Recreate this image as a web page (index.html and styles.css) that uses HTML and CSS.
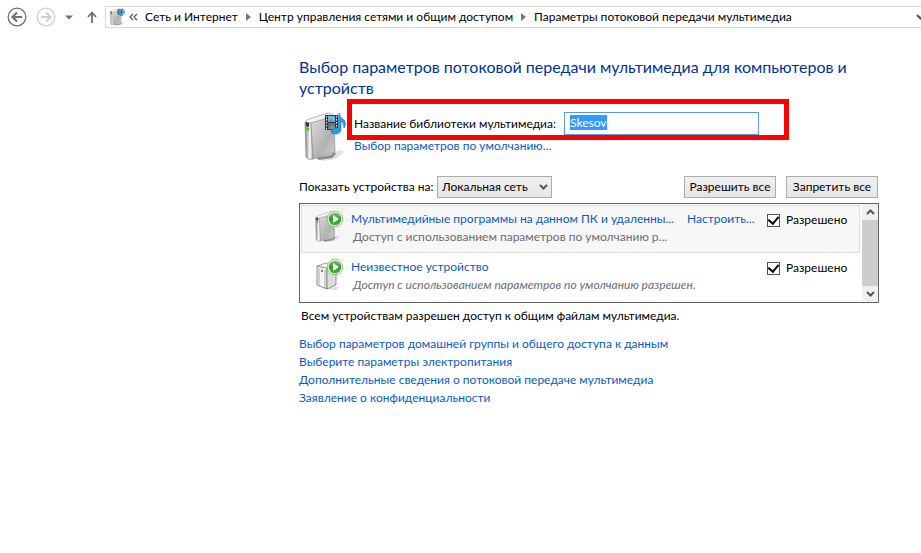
FILE: index.html
```html
<!DOCTYPE html>
<html lang="ru">
<head>
  <meta charset="UTF-8" />
  <meta name="viewport" content="width=device-width, initial-scale=1.0" />
  <title>Параметры потоковой передачи мультимедиа</title>
  <link rel="stylesheet" href="styles.css">
</head>
<body>

  <!-- Shared drawings -->
  <svg class="defs" width="0" height="0" aria-hidden="true">
    <defs>
      <linearGradient id="metal" x1="0" y1="0" x2="1" y2="1">
        <stop offset="0" stop-color="#dedede" />
        <stop offset="0.6" stop-color="#b2b2b2" />
        <stop offset="1" stop-color="#cfcfcf" />
      </linearGradient>
      <linearGradient id="side" x1="0" y1="0" x2="1" y2="0">
        <stop offset="0" stop-color="#7d7d7d" />
        <stop offset="0.6" stop-color="#fafafa" />
        <stop offset="1" stop-color="#b4b4b4" />
      </linearGradient>
      <linearGradient id="green" x1="0" y1="0" x2="0" y2="1">
        <stop offset="0" stop-color="#7cc666" />
        <stop offset="0.5" stop-color="#2f9d22" />
        <stop offset="1" stop-color="#3fb52c" />
      </linearGradient>
      <symbol id="drive" viewBox="0 0 44 50">
        <path d="M12 45 L38 38 L40 40 L32 47 L20 49Z" fill="#e2e2e2" />
        <path d="M12 46 L27 43 L30 40 L32 42 L28 46 L15 48Z" fill="#8c8c8c" />
        <path d="M1 10 L7 11 L9 47 Q5 49 2 45Z" fill="url(#side)" stroke="#888" stroke-width="0.7" />
        <path d="M7 11 L30 4 L31 40 L9 47Z" fill="url(#metal)" stroke="#8d8d8d" stroke-width="0.7" />
        <path d="M1 10 Q2 8 5 7 L24 1 Q29 1 30 4 L7 11Z" fill="#f4f4f4" stroke="#999" stroke-width="0.7" />
        <path d="M2 10 L5 11 L5 15 L2 14Z" fill="#333" />
        <path d="M2 15 L5 16 L5 19 L2 18Z" fill="#5fc01d" />
      </symbol>
      <symbol id="media" viewBox="0 0 44 50">
        <use href="#drive" width="44" height="50" />
        <path d="M21 3 h13 v15 h-13z" fill="#303b47" />
        <path d="M24 4 h7 v6 h-7z" fill="#66b8e8" />
        <path d="M24 11 h7 v6 h-7z" fill="#397fb2" />
        <path d="M24 10 l3 -3 l4 3z M24 17 l4 -4 l3 2 v2z" fill="#d57b40" />
        <path d="M22.500 4 v14 M32.500 4 v14" stroke="#e8edf2" stroke-width="1" stroke-dasharray="1.500 1.500" />
        <path d="M35 1 Q36 6 40 8 Q43 12 40 16 Q40 11 37 9 V17 Q37 22 31 22 Q27 22 27 19 Q28 15 34 16Z" fill="#2b9de6" stroke="#1671b8" stroke-width="0.6" />
      </symbol>
      <symbol id="play" viewBox="0 0 18 18">
        <circle cx="9" cy="9" r="7.800" fill="#f4f8f3" stroke="#8fa18c" stroke-width="0.8" />
        <circle cx="9" cy="9" r="6.300" fill="url(#green)" />
        <path d="M7 5 L13 9 L7 13Z" fill="#fff" />
      </symbol>
      <symbol id="crumb" viewBox="0 0 5 8">
        <path d="M0 0 L5 4 L0 8Z" fill="#777" />
      </symbol>
      <symbol id="chevron" viewBox="0 0 9 6">
        <path d="M1 1 L4.500 4.500 L8 1" fill="none" stroke="#555" stroke-width="2" />
      </symbol>
    </defs>
  </svg>

  <nav class="toolbar">
    <button class="nav-btn" aria-label="Назад">
      <svg width="20" height="20" viewBox="0 0 20 20" fill="none" stroke="#707070">
        <circle cx="10" cy="10" r="8.800" stroke-width="1.300" />
        <path d="M15 10 H6 M10 5.500 L5.500 10 L10 14.500" stroke-width="2.200" />
      </svg>
    </button>
    <button class="nav-btn" aria-label="Вперед">
      <svg width="20" height="20" viewBox="0 0 20 20" fill="none" stroke="#cfcfcf">
        <circle cx="10" cy="10" r="8.800" stroke-width="1.300" />
        <path d="M5 10 H14 M10 5.500 L14.500 10 L10 14.500" stroke-width="2" />
      </svg>
    </button>
    <button class="nav-btn" aria-label="Журнал">
      <svg width="8" height="5" viewBox="0 0 8 5"><path d="M0 0.500 H8 L4 4.500Z" fill="#707070" /></svg>
    </button>
    <button class="nav-btn nav-up" aria-label="Вверх">
      <svg width="10" height="12" viewBox="0 0 10 12" fill="none" stroke="#707070" stroke-width="1.800">
        <path d="M5 12 V2 M1 6 L5 1.500 L9 6" />
      </svg>
    </button>
    <div class="address">
      <svg class="address-icon" width="16" height="18"><use href="#media" /></svg>
      <svg class="address-back" width="9" height="8" viewBox="0 0 9 8" fill="none" stroke="#555" stroke-width="1.200">
        <path d="M4 1 L1 4 L4 7 M8 1 L5 4 L8 7" />
      </svg>
      <a href="#">Сеть и Интернет</a>
      <svg class="crumb" width="5" height="8"><use href="#crumb" /></svg>
      <a href="#">Центр управления сетями и общим доступом</a>
      <svg class="crumb" width="5" height="8"><use href="#crumb" /></svg>
      <a href="#">Параметры потоковой передачи мультимедиа</a>
      <svg class="address-drop" width="9" height="6"><use href="#chevron" /></svg>
    </div>
  </nav>

  <main class="content">
    <h1>Выбор параметров потоковой передачи мультимедиа для компьютеров и устройств</h1>

    <section class="library">
      <svg class="library-icon" width="44" height="50"><use href="#media" /></svg>
      <div class="library-form">
        <div class="library-name">
          <label for="name">Название библиотеки мультимедиа:</label>
          <input type="text" id="name" value="Skesov" autofocus>
        </div>
        <a href="#">Выбор параметров по умолчанию...</a>
      </div>
      <div class="highlight"></div>
    </section>

    <div class="filter">
      <label for="network">Показать устройства на:</label>
      <div class="select-box">
        <select id="network">
          <option>Локальная сеть</option>
          <option>Все сети</option>
        </select>
        <svg class="select-arrow" width="9" height="6"><use href="#chevron" /></svg>
      </div>
      <button class="btn btn-first">Разрешить все</button>
      <button class="btn">Запретить все</button>
    </div>

    <div class="devices">
      <ul class="device-list">
        <li class="device active">
          <div class="device-icon">
            <svg width="29" height="33" viewBox="0 0 29 33">
              <use href="#drive" y="1" width="28" height="32" />
              <use href="#play" x="11" y="0" width="18" height="18" />
            </svg>
          </div>
          <div class="device-text">
            <a href="#" class="device-name">Мультимедийные программы на данном ПК и удаленны...</a>
            <p>Доступ с использованием параметров по умолчанию р...</p>
          </div>
          <a href="#" class="setup">Настроить...</a>
          <label class="allow"><input type="checkbox" checked> Разрешено</label>
        </li>
        <li class="device">
          <div class="device-icon">
            <svg width="29" height="33" viewBox="0 0 29 33">
              <path d="M11 31 L25 28 L28 25 L21 32Z" fill="#ddd" />
              <path d="M2 8 L12 10 V31 L2 27Z" fill="#f5f5f5" stroke="#777" stroke-width="0.8" />
              <path d="M12 10 L21 7 V27 L12 31Z" fill="#dcdcdc" stroke="#777" stroke-width="0.8" />
              <path d="M2 8 L11 5 L21 7 L12 10Z" fill="#fff" stroke="#888" stroke-width="0.8" />
              <path d="M4 10 V27 M10 12 V30" stroke="#9a9a9a" stroke-width="0.8" />
              <circle cx="7" cy="13" r="1.200" fill="#4faf25" />
              <use href="#play" x="11" y="0" width="18" height="18" />
            </svg>
          </div>
          <div class="device-text unknown">
            <a href="#" class="device-name">Неизвестное устройство</a>
            <p>Доступ с использованием параметров по умолчанию разрешен.</p>
          </div>
          <label class="allow"><input type="checkbox" checked> Разрешено</label>
        </li>
      </ul>
      <div class="scrollbar">
        <button aria-label="Прокрутить вверх"><svg class="flip" width="9" height="6"><use href="#chevron" /></svg></button>
        <div class="thumb"></div>
        <button aria-label="Прокрутить вниз"><svg width="9" height="6"><use href="#chevron" /></svg></button>
      </div>
    </div>

    <p class="status">Всем устройствам разрешен доступ к общим файлам мультимедиа.</p>

    <ul class="links">
      <li><a href="#">Выбор параметров домашней группы и общего доступа к данным</a></li>
      <li><a href="#">Выберите параметры электропитания</a></li>
      <li><a href="#">Дополнительные сведения о потоковой передаче мультимедиа</a></li>
      <li><a href="#">Заявление о конфиденциальности</a></li>
    </ul>
  </main>

  <script>
    // Select the library name so it can be typed over right away
    const nameInput = document.getElementById("name");
    nameInput.focus();
    nameInput.select();
  </script>

</body>
</html>
```
FILE: styles.css
```css
* {
  box-sizing: border-box;
}
body {
  margin: 0;
  background: #fff;
  color: #000;
  font-family: Lato, "Open Sans", sans-serif;
  font-size: 12px;
  line-height: 18px;
  overflow-x: hidden;
}
a {
  color: #0a5bc4;
  text-decoration: none;
}
a:hover {
  text-decoration: underline;
}
button, input, select {
  font: inherit;
  color: inherit;
  margin: 0;
}
ul, p {
  margin: 0;
  padding: 0;
  list-style: none;
}
svg {
  display: block;
  flex: none;
}
.defs {
  position: absolute;
}

/* toolbar */
.toolbar {
  display: flex;
  align-items: center;
  padding: 6px 0 0 7px;
}
.nav-btn {
  display: flex;
  flex: none;
  padding: 0;
  margin-right: 9px;
  border: none;
  background: none;
}
.nav-btn.nav-up {
  margin: 0 8px 0 5px;
}
.address {
  display: flex;
  flex: 1;
  align-items: center;
  height: 22px;
  padding-left: 4px;
  border: 1px solid #d9d9d9;
  border-right: none;
  white-space: nowrap;
  overflow: hidden;
}
.address a {
  color: #000;
}
.address-back {
  margin: 0 7px 0 3px;
}
.crumb {
  margin: 0 8px;
}
.address-drop {
  margin: 0 -4px 0 auto;
}

/* page */
.content {
  padding: 28px 42px 0 299px;
}
h1 {
  margin: 0;
  color: #003399;
  font-size: 16px;
  font-weight: normal;
  line-height: 21px;
}
.library {
  position: relative;
  display: flex;
  padding: 14px 0 0 5px;
}
.library-icon {
  margin-right: 6px;
}
.library-name {
  display: flex;
  align-items: center;
  white-space: nowrap;
  margin-bottom: 2px;
}
.library-name label {
  width: 210px;
}
.library-name input {
  width: 195px;
  height: 23px;
  padding: 0 5px 2px;
  border: 1px solid #569de5;
  outline: none;
}
.library-name input::selection {
  background: #3399ff;
  color: #fff;
}
/* frame drawn over the name field */
.highlight {
  position: absolute;
  top: 1px;
  left: 48px;
  width: 442px;
  height: 41px;
  border: 5px solid #ff0000;
  pointer-events: none;
}
.filter {
  display: flex;
  align-items: center;
  margin-top: 14px;
  white-space: nowrap;
}
.filter label {
  width: 138px;
}
.select-box {
  position: relative;
}
.select-box select {
  display: block;
  width: 115px;
  height: 22px;
  padding: 0 18px 0 4px;
  border: 1px solid #acacac;
  border-radius: 0;
  background: linear-gradient(#f0f0f0, #e5e5e5);
  appearance: none;
}
.select-arrow {
  position: absolute;
  top: 8px;
  right: 4px;
  pointer-events: none;
}
.btn {
  width: 92px;
  height: 22px;
  padding: 0;
  margin-right: 1px;
  border: 1px solid #acacac;
  background: linear-gradient(#f0f0f0, #e5e5e5);
  line-height: 18px;
}
.btn-first {
  margin: 0 10px 0 auto;
}

/* device list */
.devices {
  display: flex;
  margin-top: 5px;
  border: 1px solid #646464;
}
.device-list {
  flex: 1;
  min-width: 0;
  padding: 1px 2px 1px 1px;
}
.device {
  display: flex;
  height: 48px;
  padding: 4px 11px 0 13px;
  border: 1px solid transparent;
}
.device.active {
  background: #f7f7f7;
  border-color: #dedede;
}
.device-icon {
  margin-right: 7px;
}
.device-text {
  flex: none;
  width: 326px;
}
.device-text.unknown {
  width: 400px;
}
.device-name, .device-text p {
  display: block;
  white-space: nowrap;
}
.device-text p {
  padding-left: 2px;
  color: #6d6d6d;
}
.unknown p {
  font-style: italic;
}
.setup {
  margin-left: 10px;
  white-space: nowrap;
}
.allow {
  display: flex;
  align-items: center;
  gap: 6px;
  width: 81px;
  height: 20px;
  margin-left: auto;
}
.allow input {
  display: grid;
  place-content: center;
  width: 13px;
  height: 13px;
  border: 1px solid #555;
  background: #fff;
  appearance: none;
}
.allow input:checked::before {
  content: "";
  width: 5px;
  height: 8px;
  margin-bottom: 2px;
  border: solid #000;
  border-width: 0 2px 2px 0;
  transform: rotate(40deg);
}
.scrollbar {
  display: flex;
  flex-direction: column;
  width: 16px;
  background: #f0f0f0;
}
.scrollbar button {
  display: flex;
  align-items: center;
  justify-content: center;
  height: 16px;
  padding: 0;
  border: none;
  background: none;
}
.flip {
  transform: scaleY(-1);
}
.thumb {
  flex: 1;
  background: #cdcdcd;
}

.status {
  padding: 4px 0 0 2px;
}
.links {
  margin-top: 10px;
}
```
